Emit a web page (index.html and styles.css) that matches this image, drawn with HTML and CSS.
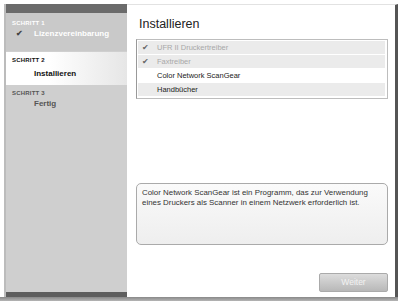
FILE: index.html
```html
<!DOCTYPE html>
<html lang="de">
<head>
    <meta charset="UTF-8">
    <title>Installieren</title>
    <link rel="stylesheet" href="styles.css">
</head>
<body>

<div class="frame">
    <div class="sidebar">
        <div class="topbar"></div>
        <div class="step done">
            <div class="step-no">SCHRITT 1</div>
            <div class="step-name"><span class="tick">&#10004;</span>Lizenzvereinbarung</div>
        </div>
        <div class="step current">
            <div class="step-no">SCHRITT 2</div>
            <div class="step-name">Installieren</div>
        </div>
        <div class="step todo">
            <div class="step-no">SCHRITT 3</div>
            <div class="step-name">Fertig</div>
        </div>
        <div class="bottombar"></div>
    </div>

    <div class="main">
        <h1 class="title">Installieren</h1>
        <ul class="items">
            <li class="done"><span class="tick">&#10004;</span>UFR II Druckertreiber</li>
            <li class="done"><span class="tick">&#10004;</span>Faxtreiber</li>
            <li class="plain"><span class="tick"></span>Color Network ScanGear</li>
            <li><span class="tick"></span>Handbücher</li>
        </ul>
        <div class="desc">Color Network ScanGear ist ein Programm, das zur Verwendung eines Druckers als Scanner in einem Netzwerk erforderlich ist.</div>
        <div class="actions">
            <a class="btn" href="#">Weiter</a>
        </div>
    </div>
</div>
<div class="footer"></div>

</body>
</html>
```

FILE: styles.css
```css
html, body {
    margin: 0;
    padding: 0;
    background: #fff;
}

body {
    width: 398px;
    height: 301px;
    overflow: hidden;
    font-family: "Liberation Sans", Arial, sans-serif;
}

ul {
    margin: 0;
    padding: 0;
    list-style: none;
}

a {
    text-decoration: none;
}

.frame {
    display: flex;
    height: 293px;
    margin: 4px 0 0 4px;
}

.sidebar {
    width: 123px;
    display: flex;
    flex-direction: column;
    background: #cfcfcf;
    border-left: 2px solid #bcbcbc;
    box-sizing: border-box;
}

.topbar {
    height: 9px;
    background: #6b6b6b;
}

.step {
    padding: 5px 0 0 6px;
}

.step-no {
    font-size: 6px;
    font-weight: bold;
    letter-spacing: .2px;
}

.step-name {
    font-size: 8px;
    font-weight: bold;
    padding-left: 22px;
    margin-top: 4px;
}

.step.done {
    height: 33px;
    background: #c9c9c9;
    color: #fff;
    margin-bottom: 1px;
}

.step.done .step-no {
    margin-top: 2px;
}

.step.done .step-name {
    padding-left: 4px;
    margin-top: 3px;
}

.step.done .tick {
    display: inline-block;
    width: 18px;
    color: #444;
    font-size: 8px;
}

.step.current {
    height: 28px;
    background: linear-gradient(to right, #fff 35%, #e6e6e6);
    color: #111;
}

.step.current .step-name {
    margin-top: 6px;
}

.step.todo {
    flex: 1;
    color: #555;
}

.step.todo .step-name {
    margin-top: 3px;
}

.bottombar {
    height: 5px;
    background: #5e5e5e;
}

.main {
    flex: 1;
    display: flex;
    flex-direction: column;
    padding: 12px 7px 0 9px;
    border-top: 1px solid #e2e2e2;
    border-right: 3px solid #555;
}

.title {
    margin: 0 0 8px 3px;
    font-size: 12.5px;
    font-weight: normal;
    color: #222;
}

.items {
    height: 57px;
    border: 1px solid #bdbdbd;
    border-left-color: #999;
    padding: 1px 2px 0 1px;
    font-size: 7.5px;
}

.items > li {
    display: flex;
    align-items: center;
    height: 13px;
    margin-bottom: 1px;
    background: #ebebeb;
    color: #222;
}

.items > li.done {
    color: #a8a8a8;
}

.items > li.plain {
    background: #fff;
}

.items .tick {
    width: 19px;
    padding-left: 4px;
    box-sizing: border-box;
    color: #666;
    font-size: 8px;
}

.desc {
    margin-top: 84px;
    height: 52px;
    padding: 4px 5px;
    border: 1px solid #aaa;
    border-radius: 5px;
    background: linear-gradient(#fafafa, #eeeeee);
    font-size: 7.9px;
    line-height: 10px;
    color: #333;
}

.actions {
    display: flex;
    justify-content: flex-end;
    margin-top: 28px;
}

.btn {
    width: 67px;
    height: 17px;
    line-height: 17px;
    text-align: center;
    border: 1px solid #aaa;
    border-radius: 2px;
    background: linear-gradient(#dcdcdc, #b8b8b8);
    color: #f2f2f2;
    font-size: 8.5px;
}

.footer {
    height: 4px;
    background: linear-gradient(#888, #b5b5b5);
}
```
